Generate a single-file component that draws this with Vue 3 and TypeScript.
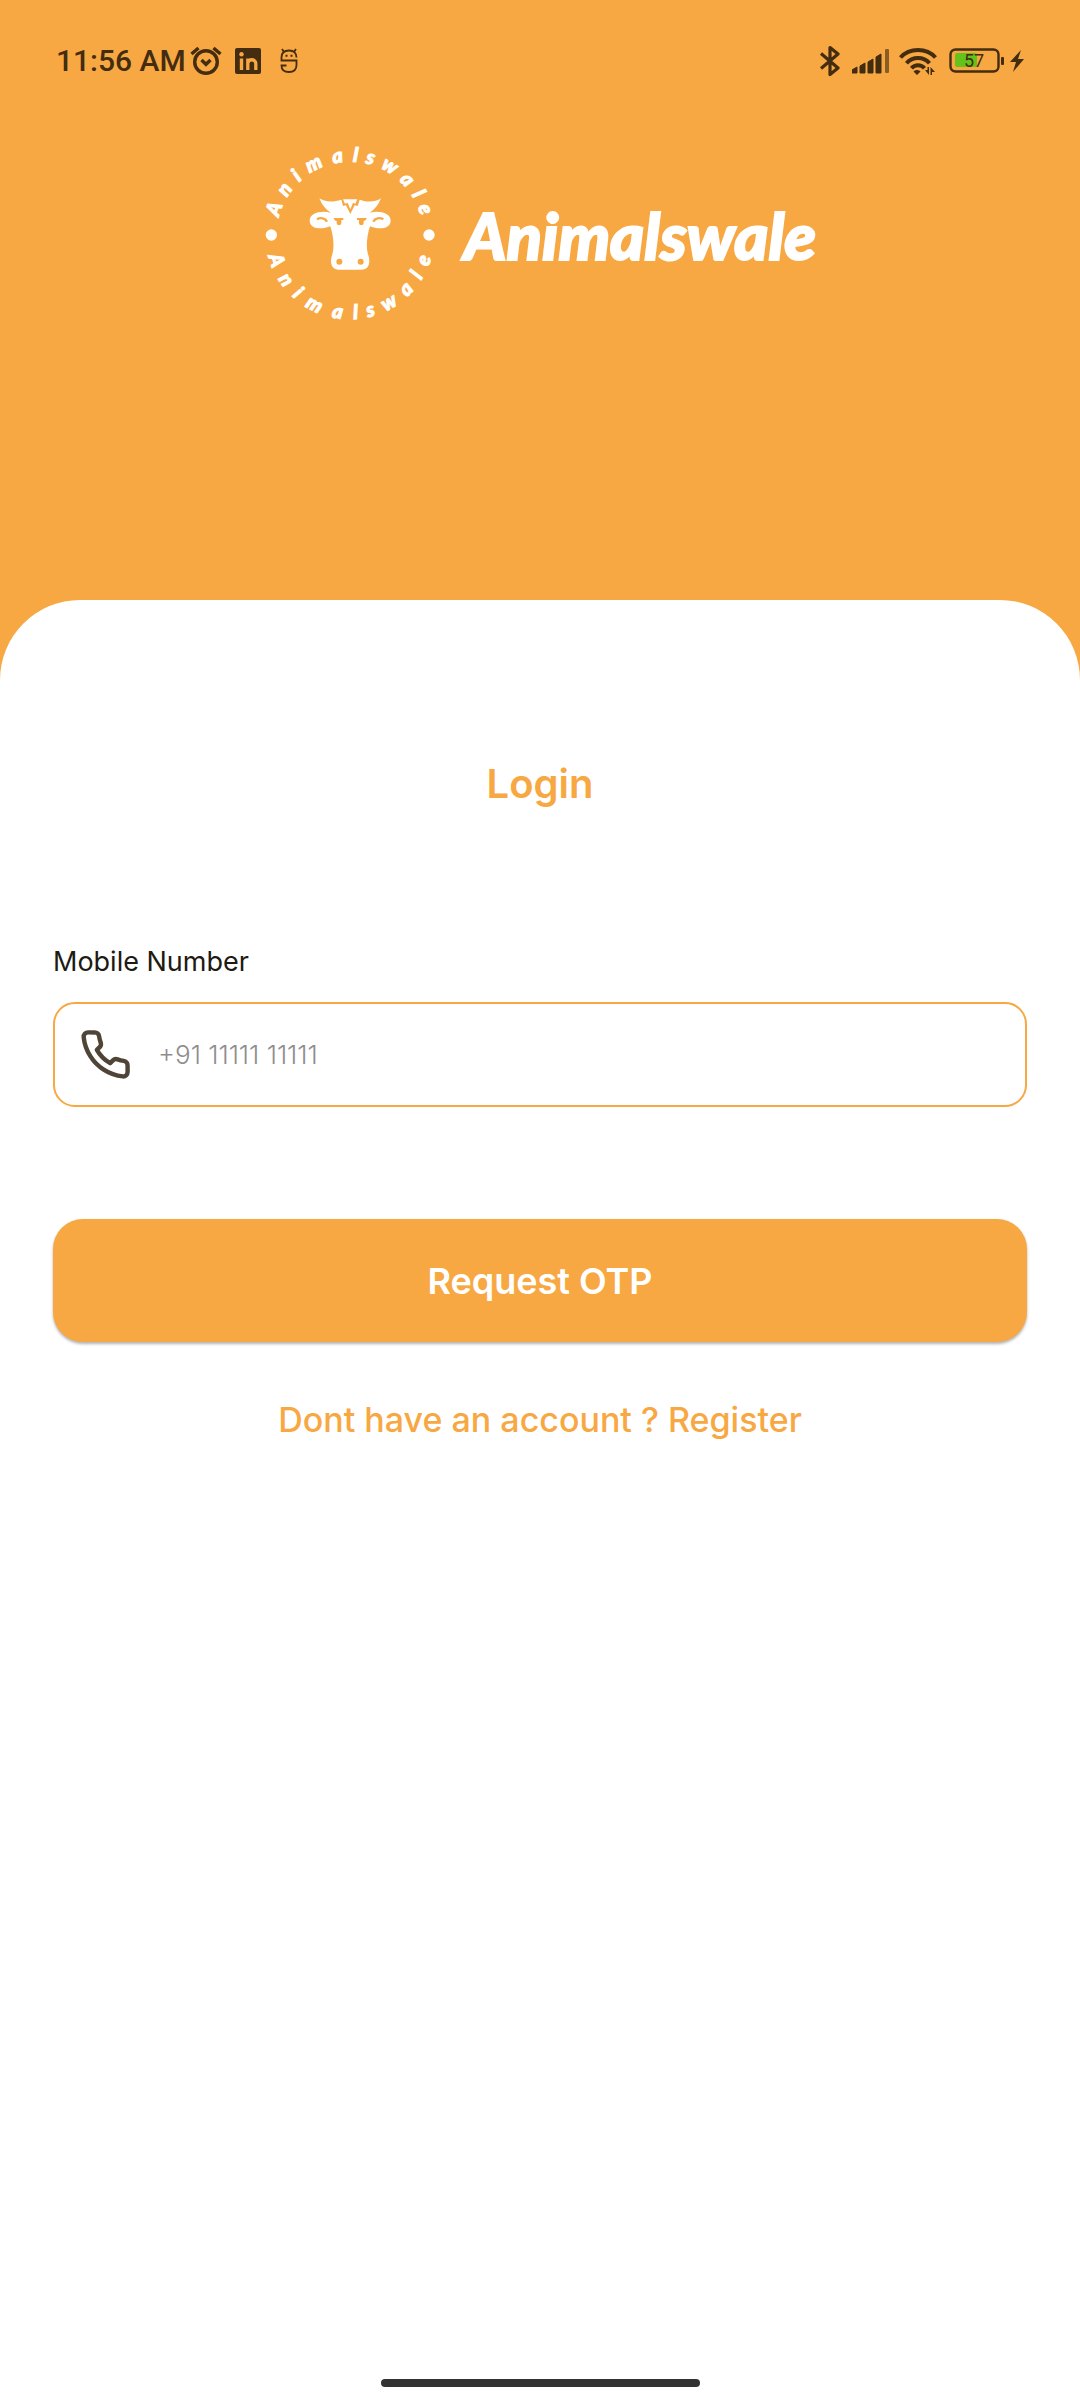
<script setup lang="ts">
import { ref } from 'vue'

interface RingLetter {
  char: string
  angle: number
}

const mobile = ref<string>('')

const ring: RingLetter[] = [
  { char: 'A', angle: -71 },
  { char: 'n', angle: -55 },
  { char: 'i', angle: -42 },
  { char: 'm', angle: -27 },
  { char: 'a', angle: -9 },
  { char: 'l', angle: 4 },
  { char: 's', angle: 15 },
  { char: 'w', angle: 30 },
  { char: 'a', angle: 46 },
  { char: 'l', angle: 59 },
  { char: 'e', angle: 71 },
]

const signalBars: number[] = [6, 10, 14, 19]
</script>

<template>
  <div class="screen">
    <header class="hero">
      <div class="status">
        <div class="status-left">
          <span class="clock">11:56 AM</span>
          <svg class="alarm" viewBox="0 0 32 30" width="32" height="30" fill="none" stroke="currentColor" stroke-width="3.4">
            <circle cx="16" cy="16" r="11.3" />
            <path d="M1.5 8 8.5 2M30.5 8 23.5 2" />
            <path d="M11.5 14 16 18.300 20.5 14" />
          </svg>
          <svg class="linkedin" viewBox="0 0 28 28" width="28" height="28">
            <rect x="1" y="1" width="26" height="26" rx="2" fill="currentColor" />
            <g fill="none" stroke="#f7a843">
              <path d="M7.5 11.5V23" stroke-width="3.4" />
              <path d="M13.8 23V11.5M13.8 16.5c0-5 8-5 8 0V23" stroke-width="3.3" />
            </g>
            <circle cx="7.5" cy="7.3" r="2.2" fill="#f7a843" />
          </svg>
          <svg class="mascot" viewBox="0 0 18 26" width="18" height="26" fill="none" stroke="currentColor" stroke-width="1.8">
            <path d="M16.500 9.500C16.500 5 14 2.500 9 2.500S1.500 5 1.500 9.500v3h15V17c0 5-3 7-7.500 7s-7.500-2-7.500-6.500h5M4 4 2 1M14 4l2-3" />
            <path d="M5.500 7.800h2M10.500 7.800h2" stroke-width="2" />
          </svg>
        </div>
        <div class="status-right">
          <svg viewBox="0 0 20 32" width="20" height="32" fill="none" stroke="currentColor" stroke-width="3.2" stroke-linejoin="round">
            <path d="M1 8.5 18 23 10 29.500V2.500L18 9 1 23.500" />
          </svg>
          <svg class="signal" viewBox="0 0 38 26" width="38" height="26" fill="currentColor">
            <path v-for="(h, i) in signalBars" :key="i" :d="`M${i * 8} ${28 - h}l5-3V25h-5z`" stroke="currentColor" stroke-width="1" stroke-linejoin="round" />
            <rect x="33" y="1" width="4" height="24" rx="1" opacity="0.6" />
          </svg>
          <svg class="wifi" viewBox="0 0 38 30" width="38" height="30">
            <g fill="none" stroke="currentColor" stroke-width="4">
              <path d="M1.500 11.500c9-10 26-10 35 0M7.500 17.300c6-7 17-7 23 0M12.500 22.300c3.500-4 9.500-4 13 0" />
            </g>
            <path d="M14.500 25.500c2-2 5-2 7 0L18 29zM26 24h2.500v-3H30v8zM33 29h-1.500v-8l4.500 5h-3z" fill="currentColor" />
          </svg>
          <svg class="battery" viewBox="0 0 56 26" width="56" height="26">
            <rect x="1.500" y="1.500" width="48" height="22" rx="5" fill="none" stroke="currentColor" stroke-width="2.4" />
            <rect x="6" y="5" width="22" height="14" rx="2" fill="#64c31a" />
            <rect x="52" y="9" width="3" height="8" rx="1" fill="currentColor" />
            <text x="25" y="19" text-anchor="middle" class="percent">57</text>
          </svg>
          <svg class="bolt" viewBox="0 0 16 24" width="16" height="24" fill="currentColor">
            <path d="M12 1 1 13h6L4 23 15 10H9z" />
          </svg>
        </div>
      </div>

      <div class="brand">
        <svg class="emblem" viewBox="10 23 576 588" width="192" height="196" fill="#fff">
          <circle cx="62" cy="317" r="17" />
          <circle cx="535" cy="317" r="17" />
          <g class="ring-text" text-anchor="middle" stroke="#fff" stroke-width="3">
            <text v-for="(l, i) in ring" :key="'t' + i" x="298" y="97" :transform="`rotate(${l.angle} 298 317)`">{{ l.char }}</text>
            <text v-for="(l, i) in ring" :key="'b' + i" x="298" y="570" :transform="`rotate(${-l.angle} 298 317)`">{{ l.char }}</text>
          </g>
          <path d="M206 207c14 10 40 13 66 4l5 19 9-2 13 26 13-26 9 2 6-19c24 9 48 7 64-4-8 20-19 34-34 43 30-7 63 1 63 24 0 25-36 28-62 17-10 30-12 62-6 84 8 20 5 46-20 46h-67c-25 0-28-26-20-46 6-22 4-54-6-84-26 11-62 8-62-17 0-23 33-31 63-24-15-9-26-23-34-43z" />
          <path d="M277 210h43l-6 13-7-3-8 20-8-20-8 3z" />
          <g fill="#f7a843">
            <path d="M249 266h29v6h-6v8c0 10-14 10-14 0v-5c-5 0-8-4-9-9zM348 266h-29v6h6v8c0 10 14 10 14 0v-5c5 0 8-4 9-9z" />
            <circle cx="266" cy="397" r="9" />
            <circle cx="330" cy="397" r="9" />
          </g>
          <path d="M199 270c10-6 25-4 30 7M398 270c-10-6-25-4-30 7" fill="none" stroke="#f7a843" stroke-width="7" />
        </svg>
        <span class="wordmark">Animalswale</span>
      </div>
    </header>

    <main class="card">
      <h1 class="title">Login</h1>
      <form class="form" @submit.prevent>
        <label class="label" for="mobile">Mobile Number</label>
        <div class="field">
          <svg viewBox="0 0 24 24" width="53" height="53" fill="none" stroke="#4f4537" stroke-width="2" stroke-linecap="round" stroke-linejoin="round" aria-hidden="true">
            <path d="M22 16.920v3a2 2 0 0 1-2.180 2 19.790 19.790 0 0 1-8.630-3.070 19.500 19.500 0 0 1-6-6 19.790 19.790 0 0 1-3.070-8.670A2 2 0 0 1 4.110 2h3a2 2 0 0 1 2 1.720 12.840 12.840 0 0 0 .7 2.810 2 2 0 0 1-.45 2.110L8.090 9.910a16 16 0 0 0 6 6l1.270-1.270a2 2 0 0 1 2.110-.45 12.840 12.840 0 0 0 2.810.7A2 2 0 0 1 22 16.920z" />
          </svg>
          <input id="mobile" v-model="mobile" type="tel" placeholder="+91 11111 11111" />
        </div>
        <button class="submit" type="submit">Request OTP</button>
      </form>
      <a class="register" href="#register">Dont have an account ? Register</a>
      <div class="home-bar"></div>
    </main>
  </div>
</template>

<style>
body {
  margin: 0;
  background: #f7a843;
}
</style>

<style scoped>
.screen {
  display: flex;
  flex-direction: column;
  min-height: 100vh;
  background: #f7a843;
  font-family: Inter, "Open Sans", sans-serif;
}

.hero {
  box-sizing: border-box;
  height: 600px;
}

.status {
  display: flex;
  justify-content: space-between;
  align-items: center;
  padding: 40px 55px 0 56px;
  height: 42px;
  color: #432c10;
}

.status-left,
.status-right {
  display: flex;
  align-items: center;
}

.clock {
  font: 500 30px/42px Roboto, sans-serif;
}

.alarm {
  margin-left: 4px;
}

.linkedin {
  margin-left: 12px;
}

.mascot {
  margin-left: 18px;
}

.signal {
  margin-left: 12px;
}

.wifi {
  margin-left: 9px;
}

.battery {
  margin-left: 12px;
}

.bolt {
  margin-left: 4px;
}

.percent {
  font: 400 18px Roboto, sans-serif;
  fill: #432c10;
}

.brand {
  display: flex;
  justify-content: center;
  align-items: center;
  gap: 18px;
  margin-top: 55px;
  padding-right: 10px;
}

.emblem {
  flex: none;
  overflow: visible;
}

.ring-text {
  font: italic 900 60px Lato, sans-serif;
}

.wordmark {
  color: #fff;
  font: italic 900 65px/72px Lato, sans-serif;
  -webkit-text-stroke: 2px #fff;
}

.card {
  display: flex;
  flex: 1;
  flex-direction: column;
  align-items: center;
  padding: 152px 53px 13px;
  border-radius: 80px 80px 0 0;
  background: #fff;
}

.title {
  margin: 0;
  color: #f7a843;
  font-size: 40px;
  font-weight: 600;
  line-height: 64px;
}

.form {
  display: flex;
  flex-direction: column;
  align-self: stretch;
}

.label {
  margin-top: 126px;
  color: #201a12;
  font-size: 27px;
  line-height: 40px;
}

.field {
  display: flex;
  align-items: center;
  gap: 26px;
  box-sizing: border-box;
  height: 105px;
  margin-top: 20px;
  padding: 0 24px;
  border: 2px solid #f7a843;
  border-radius: 22px;
}

.field input {
  flex: 1;
  min-width: 0;
  padding: 0;
  border: 0;
  outline: 0;
  background: transparent;
  color: #201a12;
  font: 300 26px/42px Inter, "Open Sans", sans-serif;
}

.field input::placeholder {
  color: #8e8e8e;
  opacity: 1;
}

.submit {
  height: 123px;
  margin-top: 112px;
  padding: 0;
  border: 0;
  border-radius: 30px;
  background: #f7a843;
  box-shadow: 0 2px 3px rgba(0, 0, 0, 0.3);
  color: #fff;
  font: 600 36px/54px Inter, "Open Sans", sans-serif;
}

.register {
  margin-top: 54px;
  color: #f7a843;
  font-size: 34px;
  font-weight: 500;
  line-height: 48px;
  text-decoration: none;
}

.home-bar {
  width: 319px;
  height: 8px;
  margin-top: auto;
  border-radius: 4px;
  background: #333;
}
</style>
